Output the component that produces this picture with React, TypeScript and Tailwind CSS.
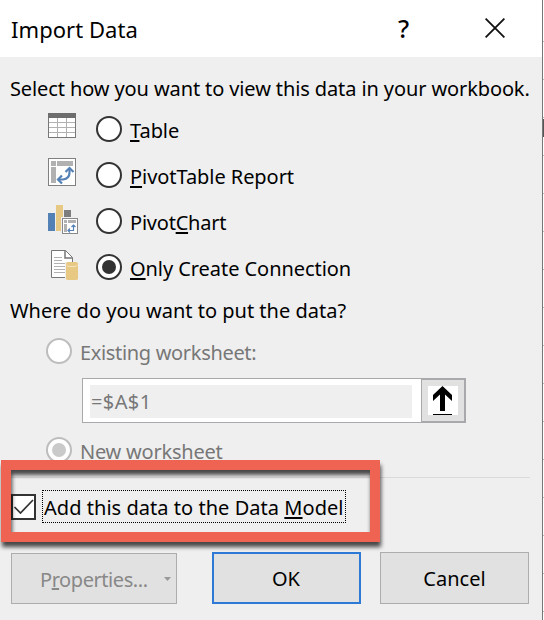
import React from "react";

function Radio({ on = false, disabled = false }: { on?: boolean; disabled?: boolean }) {
  const ring = disabled ? "border-[#bdbdbd]" : "border-[#333]";
  const dot = disabled ? "bg-[#cacaca]" : "bg-[#333]";
  return (
    <span className={"flex h-[26px] w-[26px] shrink-0 items-center justify-center rounded-full border-2 bg-white " + ring}>
      {on && <span className={"h-[14px] w-[14px] rounded-full " + dot} />}
    </span>
  );
}

function Key({ children }: { children: string }) {
  return <span className="underline decoration-2 underline-offset-[2px] [text-decoration-skip-ink:none]">{children}</span>;
}

function PivotGlyph() {
  return (
    <g>
      <rect x=".5" y=".5" width="27" height="27" fill="#fff" stroke="#808080" />
      <path d="M3 3h5v5H3zM9 3h16v5H9zM3 9h5v16H3z" fill="#b1b1b1" />
      <path d="M11 21.500h4q6.500-1 6.500-7V11" fill="none" stroke="#5380b5" strokeWidth="2.200" />
      <path d="m17.500 14 4-4 4 4M14 17.500l-4 4 4 4" fill="none" stroke="#5380b5" strokeWidth="2.200" />
    </g>
  );
}

function TableIcon() {
  return (
    <svg width="28" height="25" viewBox="0 0 28 25" shapeRendering="crispEdges">
      <rect x=".5" y=".5" width="27" height="24" fill="#fff" stroke="#777" />
      <path d="M0 0h28v5H0z" fill="#6d6d6d" />
      <path d="M1 9.500h26M1 14.500h26M1 19.500h26M9.500 5v19M18.500 5v19" stroke="#b1b1b1" />
    </svg>
  );
}

function ChartIcon() {
  return (
    <svg width="30" height="29" viewBox="0 0 30 29">
      <path d="M0 8h7v18H0z" fill="#5380b5" />
      <path d="M8 0h7v26H8z" fill="#e8c983" />
      <path d="M16 5h7v8h-7z" fill="#7d7d7d" />
      <path d="M13 12h17v17H13z" fill="#efefef" />
      <rect x="14.500" y="13.500" width="15" height="15" fill="#fff" stroke="#888" />
      <path d="M16 15h3v3h-3zM20 15h8v3h-8zM16 19h3v8h-3z" fill="#b1b1b1" />
      <path d="M20 25.500h5.500v-5M23.500 22l2-2 2 2M22 23.500l-2 2 2 2" fill="none" stroke="#5380b5" strokeWidth="1.200" />
    </svg>
  );
}

function ConnectionIcon() {
  return (
    <svg width="28" height="30" viewBox="0 0 28 30">
      <path d="M.5.500h14l7 7v20H.5z" fill="#fff" stroke="#777" />
      <path d="M14 .5V8h7.500" fill="none" stroke="#777" strokeWidth="1.500" />
      <path d="M3 7.500h8M3 10.500h8M3 13.500h12M3 16.500h12M3 19.500h12M3 22.500h12" stroke="#b1b1b1" />
      <path d="M14 12h14v18H14z" fill="#efefef" />
      <path d="M15 13.500q0-1.500 2-1.500h8q2 0 2 1.500v15q0 1.500-2 1.500h-8q-2 0-2-1.500z" fill="#e8c983" />
      <path d="M15.500 15q1 1.500 3 1.500h5q2 0 3-1.500" fill="none" stroke="#f5e6c2" />
    </svg>
  );
}

export default function App() {
  return (
    <div className="relative flex h-[620px] w-[544px] overflow-hidden bg-white font-['Noto_Sans',sans-serif] text-[20px] leading-[26px] whitespace-nowrap text-black">
      <main className="flex w-[543px] shrink-0 flex-col border-r border-[#777] bg-[#efefef]">
        <header className="flex h-[57px] shrink-0 items-center bg-white pl-[11px] text-[22px]">
          <h1 className="w-[387px] tracking-[0.050px]">Import Data</h1>
          <span className="w-[87px] pb-[2px] text-[25px] font-medium">?</span>
          <svg className="mb-px" width="20" height="20" viewBox="0 0 20 20"><path d="m.6.600 18.800 18.800M19.400.600.600 19.400" stroke="#111" strokeWidth="1.800" /></svg>
        </header>

        <p className="mt-[19px] ml-[10px] tracking-[-0.110px]">Select how you want to view this data in your workbook.</p>

        <section className="mt-1 ml-[48px] flex flex-col tracking-[-0.060px]">
          <label className="flex h-[46px] items-center">
            <span className="w-[48px] pb-[7px]"><TableIcon /></span><Radio />
            <span className="ml-2 pt-[3px]"><Key>T</Key>able</span>
          </label>
          <label className="flex h-[46px] items-center">
            <span className="w-[48px] pb-[6px]"><svg width="28" height="28" viewBox="0 0 28 28"><PivotGlyph /></svg></span><Radio />
            <span className="ml-2 pt-[3px]"><Key>P</Key>ivotTable Report</span>
          </label>
          <label className="flex h-[46px] items-center">
            <span className="w-[48px] pb-[3px]"><ChartIcon /></span><Radio />
            <span className="ml-2 pt-[3px] tracking-[-0.220px]">Pivot<Key>C</Key>hart</span>
          </label>
          <label className="flex h-[46px] items-center">
            <span className="w-[48px] pb-[4px] pl-[3px]"><ConnectionIcon /></span><Radio on />
            <span className="ml-2 pt-[3px]"><Key>O</Key>nly Create Connection</span>
          </label>
        </section>

        <p className="mt-[8px] ml-[10px]">Where do you want to put the data?</p>

        <section className="ml-[46px] text-[#777]">
          <label className="mt-[14px] flex h-[26px] items-center">
            <Radio disabled /><span className="ml-2 pt-[3px] tracking-[-0.330px]">Existing worksheet:</span>
          </label>
          <div className="mt-[14px] ml-[36px] flex h-[45px] w-[384px]">
            <div className="w-[339px] border border-r-0 border-[#a9a9ad] bg-white py-[6px] pl-[7px]">
              <div className="flex h-[33px] w-[322px] items-center bg-[#efefef] pl-[1px] tracking-[0.400px]">=$A$1</div>
            </div>
            <div className="flex w-[45px] items-center justify-center border-2 border-l border-[#a9a9ad] bg-[#e1e1e1]">
              <svg width="30" height="29" viewBox="0 0 30 29">
                <path d="M0 0h30v29H0z" fill="#fff" />
                <path d="M5 9 14.500 0 24 9v6l-7-6.500V25h-5V8.500L5 15zM5 28h19v1H5z" fill="#000" />
              </svg>
            </div>
          </div>
          <label className="mt-[14px] flex h-[26px] items-center">
            <Radio on disabled /><span className="ml-2 pt-[3px] tracking-[-0.230px]">New worksheet</span>
          </label>
        </section>

        <hr className="mt-[14px] mr-[12px] ml-[11px] border-[#dadada]" />
        <label className="mt-[12px] ml-[11px] flex h-[33px] items-center">
          <span className="flex h-[26px] w-[25px] items-center justify-center border-2 border-[#333] bg-white">
            <svg width="21" height="18" viewBox="0 0 21 18"><path d="m1.500 9 6 6L20 2" fill="none" stroke="#333" strokeWidth="1.700" /></svg>
          </span>
          <span className="ml-[6px] flex h-[33px] w-[304px] items-center border border-dotted border-black pt-[2px] pl-[1px]"><span className="tracking-[0.040px]">Add this data to the Data <Key>M</Key>odel</span></span>
        </label>

        <footer className="mt-[29px] flex items-end pl-[11px]">
          <button className="flex h-[51px] w-[166px] items-center border border-[#adadad] bg-[#e1e1e1] pl-[28px] text-[#888]">
            <span className="w-[124px] pt-[2px] text-left tracking-[-0.430px]">P<span className="underline">r</span>operties...</span>
            <svg width="7" height="4" viewBox="0 0 7 4"><path d="M0 0h7L3.500 4z" fill="#999" /></svg>
          </button>
          <button className="ml-[35px] h-[52px] w-[149px] border-2 border-[#2d7ad6] bg-[#e1e1e1] pt-[2px] pr-[1px]">OK</button>
          <button className="ml-[19px] h-[52px] w-[149px] border border-[#adadad] bg-[#e1e1e1] pt-[2px]">Cancel</button>
        </footer>
      </main>
      <aside className="w-px shrink-0 bg-[repeating-linear-gradient(to_bottom,#fff_0_37px,#bbb_37px_38px)] pt-[119px] [background-position:0_4px]">
        <div className="h-[18px] bg-[#555]" />
      </aside>

      <div className="pointer-events-none absolute top-[460px] left-[1px] h-[82px] w-[379px] border-[10px] border-[#ee6352] [filter:drop-shadow(1px_5px_2px_rgba(0,0,0,0.700))]" />
    </div>
  );
}
